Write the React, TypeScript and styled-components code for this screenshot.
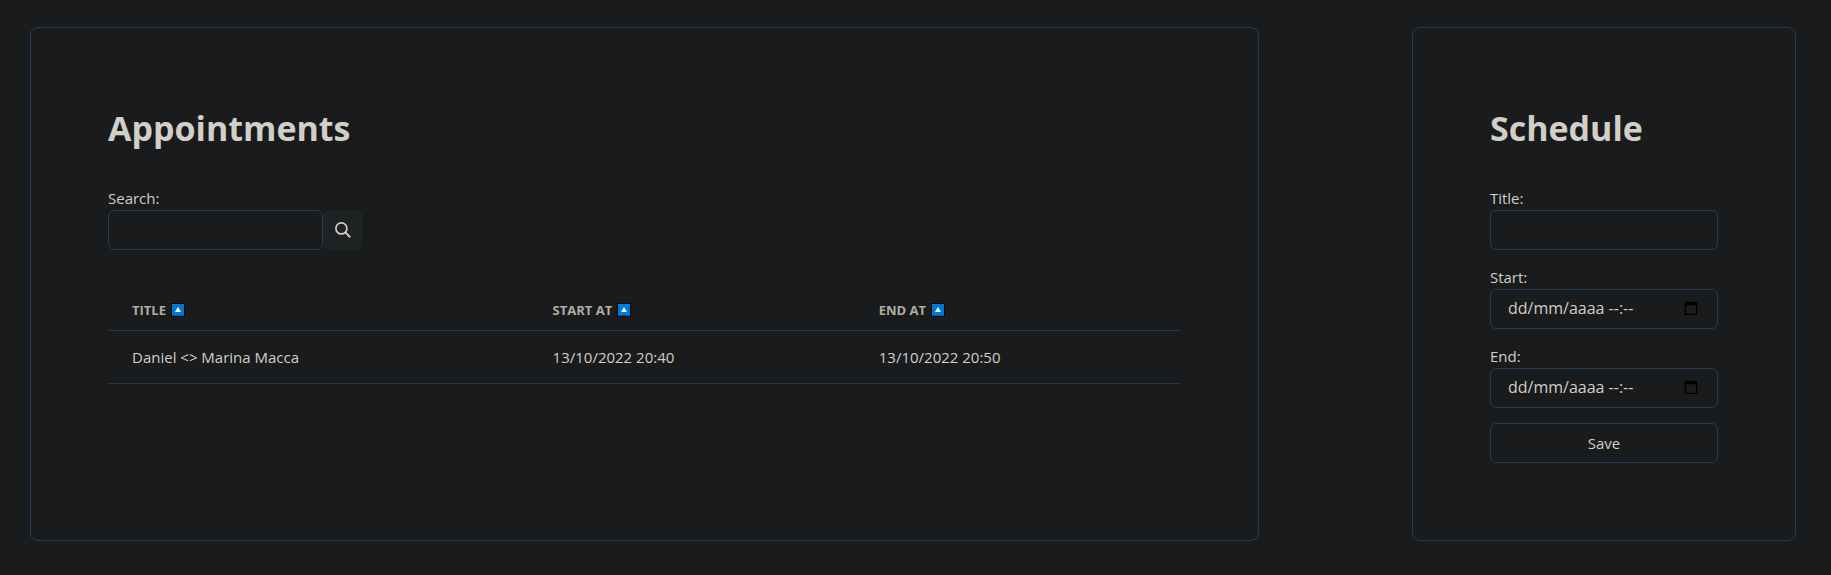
import React from "react";
import styled, { createGlobalStyle } from "styled-components";

const colors = {
  page: "#191b1c",
  text: "#d2cec8",
  muted: "#b2aca2",
  border: "#263b54",
  rule: "#22384f",
  button: "#1f2223",
};

const GlobalStyle = createGlobalStyle`
  *, *::before, *::after { box-sizing: border-box; }
  body {
    margin: 0;
    background: ${colors.page};
    color: ${colors.text};
    font-family: "Segoe UI", "Open Sans", "Noto Sans", sans-serif;
    font-size: 15px;
    line-height: 24px;
  }
  button, input { font: inherit; color: inherit; margin: 0; }
`;

const Page = styled.main`
  display: grid;
  grid-template-columns: minmax(0, 16fr) minmax(0, 5fr);
  gap: 153px;
  padding: 27px 35px 34px 30px;
`;

const Panel = styled.section`
  padding: 77px;
  border: 1px solid ${colors.border};
  border-radius: 8px;
`;

const Heading = styled.h1`
  margin: 0;
  padding: 2px 0 36px;
  font-size: 34px;
  line-height: 43px;
  font-weight: 700;
`;

const Label = styled.label`
  display: block;
`;

const TextInput = styled.input`
  display: block;
  width: 100%;
  height: 40px;
  padding: 0 16px;
  border: 1px solid ${colors.border};
  border-radius: 6px;
  background: transparent;
  outline: none;

  &::placeholder {
    color: inherit;
    opacity: 1;
  }
`;

const DateInput = styled(TextInput)`
  padding: 0 40px 2px 17px;
  font-size: 16px;
`;

const SearchRow = styled.div`
  display: flex;
`;

const SearchBox = styled.div`
  width: 215px;
`;

const SearchButton = styled.button`
  display: flex;
  align-items: center;
  justify-content: center;
  width: 40px;
  height: 40px;
  padding: 0;
  border: 0;
  border-radius: 6px;
  background: ${colors.button};
`;

const Table = styled.table`
  width: 100%;
  margin-top: 40px;
  border-collapse: collapse;
  table-layout: fixed;
`;

const HeaderCell = styled.th<{ $width: string }>`
  width: ${(p) => p.$width};
  padding: 12px 24px;
  border-bottom: 1px solid ${colors.rule};
  color: ${colors.muted};
  text-align: left;
`;

const SortButton = styled.button`
  display: flex;
  align-items: center;
  gap: 5px;
  padding: 0;
  border: 0;
  background: none;
  font-size: 13px;
  line-height: 16px;
  font-weight: 700;
  text-transform: uppercase;
`;

const Cell = styled.td`
  padding: 16px 24px;
  border-bottom: 1px solid ${colors.rule};
  line-height: 20px;
`;

const Form = styled.form`
  display: flex;
  flex-direction: column;
  gap: 15px;
`;

const DateBox = styled.div`
  position: relative;
`;

const PickerButton = styled.button`
  position: absolute;
  top: 9px;
  right: 17px;
  display: flex;
  width: 20px;
  height: 20px;
  padding: 0;
  border: 0;
  background: none;
`;

const SaveButton = styled.button`
  width: 100%;
  height: 40px;
  border: 1px solid ${colors.border};
  border-radius: 6px;
  background: transparent;
`;

const SearchIcon = () => (
  <svg width="16" height="16" viewBox="0 0 16 16" fill="none" stroke="currentColor" aria-hidden="true">
    <circle cx="6.4" cy="6.4" r="5.5" strokeWidth="1.7" />
    <path d="M10.4 10.4 15.2 15.2" strokeWidth="2" />
  </svg>
);

const SortIcon = () => (
  <svg width="14" height="14" viewBox="0 0 14 14" aria-hidden="true">
    <rect width="14" height="14" fill="#06090c" />
    <rect x="1" y="1" width="12" height="12" fill="#0078d7" />
    <rect x="1" y="12" width="12" height="1" fill="#005ba8" />
    <path d="M7 4 10 9H4Z" fill="#fff" />
  </svg>
);

const CalendarIcon = () => (
  <svg width="20" height="20" viewBox="0 0 20 20" aria-hidden="true">
    <path
      fill="#000"
      fillRule="evenodd"
      d="M5 3h1.300v1h7.400V3H15v1h.4a1 1 0 0 1 1 1v11a1 1 0 0 1-1 1H4.600a1 1 0 0 1-1-1V5a1 1 0 0 1 1-1H5ZM5 7.200V15.700h10V7.200Z"
    />
  </svg>
);

const columns = [
  { name: "Title", width: "39.2%" },
  { name: "Start at", width: "30.4%" },
  { name: "End at", width: "30.4%" },
];

const appointments = [
  { title: "Daniel <> Marina Macca", start: "13/10/2022 20:40", end: "13/10/2022 20:50" },
];

const DateField = ({ id, label }: { id: string; label: string }) => (
  <div>
    <Label htmlFor={id}>{label}</Label>
    <DateBox>
      <DateInput id={id} type="text" placeholder="dd/mm/aaaa --:--" />
      <PickerButton type="button" aria-label="Open calendar">
        <CalendarIcon />
      </PickerButton>
    </DateBox>
  </div>
);

export default function App() {
  return (
    <>
      <GlobalStyle />
      <Page>
        <Panel>
          <Heading>Appointments</Heading>
          <Label htmlFor="search">Search:</Label>
          <SearchRow>
            <SearchBox>
              <TextInput id="search" type="text" />
            </SearchBox>
            <SearchButton type="button" aria-label="Search">
              <SearchIcon />
            </SearchButton>
          </SearchRow>
          <Table>
            <thead>
              <tr>
                {columns.map((column) => (
                  <HeaderCell key={column.name} $width={column.width}>
                    <SortButton type="button">
                      {column.name}
                      <SortIcon />
                    </SortButton>
                  </HeaderCell>
                ))}
              </tr>
            </thead>
            <tbody>
              {appointments.map((item) => (
                <tr key={item.title}>
                  <Cell>{item.title}</Cell>
                  <Cell>{item.start}</Cell>
                  <Cell>{item.end}</Cell>
                </tr>
              ))}
            </tbody>
          </Table>
        </Panel>
        <Panel>
          <Heading>Schedule</Heading>
          <Form>
            <div>
              <Label htmlFor="title">Title:</Label>
              <TextInput id="title" type="text" />
            </div>
            <DateField id="start" label="Start:" />
            <DateField id="end" label="End:" />
            <SaveButton type="button">Save</SaveButton>
          </Form>
        </Panel>
      </Page>
    </>
  );
}
